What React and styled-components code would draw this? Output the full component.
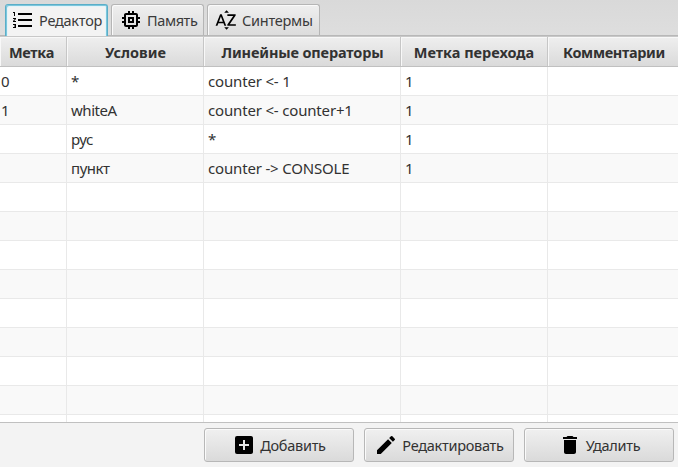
import React from 'react';
import styled, { createGlobalStyle } from 'styled-components';
import {
  MdFormatListNumbered, MdMemory, MdSortByAlpha, MdAddBox, MdEdit, MdDelete,
} from 'react-icons/md';

const GlobalStyle = createGlobalStyle`
  * { box-sizing: border-box; }
  body { margin: 0; overflow: hidden; }
`;

const Window = styled.div`
  display: flex;
  flex-direction: column;
  width: 678px;
  height: 467px;
  background: #f3f3f3;
  color: #323232;
  font: 15px/20px 'Noto Sans', 'Open Sans', sans-serif;
`;

const TabBar = styled.nav`
  display: flex;
  gap: 3px;
  height: 36px;
  padding: 4px 0 0 5px;
  background: linear-gradient(#d9d9d9, #dedede);
  border-bottom: 1px solid #b8b8b8;
`;

const Tab = styled.button`
  display: flex;
  align-items: center;
  gap: 4px;
  width: ${(p) => p.$width}px;
  height: ${(p) => (p.$active ? 32 : 31)}px;
  padding: 0 0 ${(p) => (p.$active ? 1 : 0)}px ${(p) => p.$inset}px;
  border: 1px solid ${(p) => (p.$active ? '#5aaec8' : '#b5b5b5')};
  border-bottom: 0;
  border-radius: 3px 3px 0 0;
  background: ${(p) => (p.$active ? '#f3f3f3' : 'linear-gradient(#efefef, #dcdcdc)')};
  box-shadow: ${(p) => (p.$active
    ? 'inset 1px 1px 0 #7cc6dc, inset -1px 0 0 #7cc6dc, inset 2px 2px 0 #e3f4f9, inset -2px 0 0 #e3f4f9'
    : 'inset 1px 1px 0 #fafafa')};
  color: #3a3a3a;
  font: inherit;
  font-size: 14.5px;
  letter-spacing: ${(p) => p.$spacing}px;
  white-space: nowrap;
  svg { flex: none; color: #000; }
`;

const Table = styled.main`
  height: 387px;
  overflow: hidden;
  background: #fff;
  border-bottom: 1px solid #c0c0c0;
`;

const Row = styled.div`
  display: grid;
  grid-template-columns: 67px 137px 197px 147px 131px;
  height: 29px;
  background: ${(p) => (p.$odd ? '#f9f9f9' : '#fff')};
`;

const HeaderRow = styled(Row)`
  height: 31px;
  background: linear-gradient(#efefef, #dadada);
  border-top: 1px solid #c8c8c8;
  border-bottom: 1px solid #c0c0c0;
`;

const HeaderCell = styled.div`
  display: flex;
  align-items: center;
  justify-content: center;
  padding: 0 ${(p) => p.$trim}px 0 ${(p) => p.$lead || 0}px;
  border-right: 1px solid #c6c6c6;
  box-shadow: inset 1px 1px 0 #f8f8f8;
  font-weight: 700;
  font-size: 14.5px;
  letter-spacing: ${(p) => p.$spacing}px;
  white-space: nowrap;
`;

const Cell = styled.div`
  display: flex;
  align-items: center;
  padding-left: ${(p) => (p.$column === 0 ? 1 : 4)}px;
  border-right: 1px solid #e9e9e9;
  border-bottom: 1px solid #e9e9e9;
  letter-spacing: ${(p) => (p.$column === 1 ? -0.45 : -0.17)}px;
  white-space: pre;
`;

const Actions = styled.footer`
  display: flex;
  justify-content: flex-end;
  gap: 10px;
  padding: 5px 4px 0 0;
`;

const ActionButton = styled.button`
  display: flex;
  align-items: center;
  justify-content: center;
  gap: 4px;
  width: 150px;
  height: 34px;
  padding: 0;
  border: 1px solid #b7b7b7;
  border-radius: 3px;
  background: linear-gradient(#f0f0f0, #dadada);
  box-shadow: inset 1px 1px 0 #fafafa;
  color: #323232;
  font: inherit;
  font-size: 14.5px;
  letter-spacing: -0.28px;
  svg { flex: none; color: #000; }
`;

const tabs = [
  { label: 'Редактор', icon: MdFormatListNumbered, width: 103, inset: 5, active: true, spacing: -0.25 },
  { label: 'Память', icon: MdMemory, width: 93, inset: 7, spacing: -0.4 },
  { label: 'Синтермы', icon: MdSortByAlpha, width: 113, inset: 6, spacing: -0.25 },
];

const headers = [
  { label: 'Метка', spacing: -0.3, trim: 3 },
  { label: 'Условие', spacing: 0, trim: 0, lead: 1 },
  { label: 'Линейные операторы', spacing: -0.15, trim: 0, lead: 1 },
  { label: 'Метка перехода', spacing: 0, trim: 0 },
  { label: 'Комментарии', spacing: -0.35, trim: 0, lead: 2 },
];

const rows = [
  ['0', '*', 'counter <- 1', '1', ''],
  ['1', 'whiteA', 'counter <- counter+1', '1', ''],
  ['', 'рус', '*', '1', ''],
  ['', 'пункт', 'counter -> CONSOLE', '1', ''],
  ...Array.from({ length: 9 }, () => ['', '', '', '', '']),
];

const actions = [
  { label: 'Добавить', icon: MdAddBox },
  { label: 'Редактировать', icon: MdEdit },
  { label: 'Удалить', icon: MdDelete },
];

export default function App() {
  return (
    <Window>
      <GlobalStyle />
      <TabBar>
        {tabs.map(({ label, icon: Icon, width, inset, active, spacing }) => (
          <Tab key={label} $width={width} $inset={inset} $active={active} $spacing={spacing}>
            <Icon size={24} />
            <span>{label}</span>
          </Tab>
        ))}
      </TabBar>
      <Table>
        <HeaderRow>
          {headers.map(({ label, spacing, trim, lead }) => (
            <HeaderCell key={label} $spacing={spacing} $trim={trim} $lead={lead}>
              <span>{label}</span>
            </HeaderCell>
          ))}
        </HeaderRow>
        {rows.map((row, i) => (
          <Row key={i} $odd={i % 2 === 1}>
            {row.map((text, j) => <Cell key={j} $column={j}>{text}</Cell>)}
          </Row>
        ))}
      </Table>
      <Actions>
        {actions.map(({ label, icon: Icon }) => (
          <ActionButton key={label}>
            <Icon size={24} />
            <span>{label}</span>
          </ActionButton>
        ))}
      </Actions>
    </Window>
  );
}
